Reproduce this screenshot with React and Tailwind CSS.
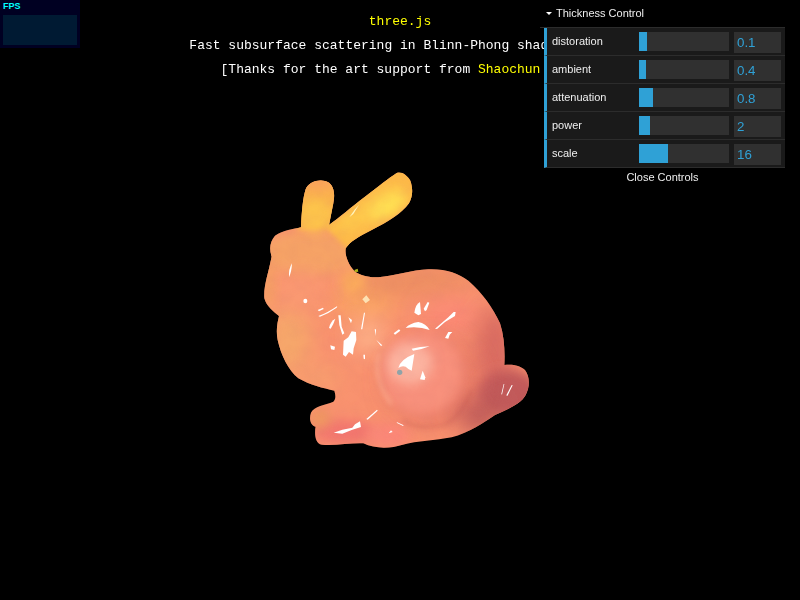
const sans = 'font-["Liberation_Sans",Arial,sans-serif]';

const controls = [
  { label: 'distoration', value: '0.1', fill: 8 },
  { label: 'ambient', value: '0.4', fill: 7 },
  { label: 'attenuation', value: '0.8', fill: 14 },
  { label: 'power', value: '2', fill: 11 },
  { label: 'scale', value: '16', fill: 29 },
];

const silhouette =
  'M138,172 C140,130 143,85 152,58 C162,34 198,24 222,38 C238,50 240,75 235,100 L222,165 C250,145 290,110 330,80 C370,50 400,25 425,9 C440,4 455,15 466,32 C474,55 474,78 462,100 C440,130 400,155 350,180 C310,200 285,215 272,235 C268,260 285,290 300,305 C320,318 345,322 370,322 C420,318 470,300 520,298 C570,296 610,310 640,332 C680,365 715,415 735,460 C748,500 750,545 748,585 C770,582 795,585 810,600 C825,620 825,650 812,675 C795,705 760,715 720,735 C690,755 640,790 590,802 C540,812 490,812 440,825 C410,835 360,838 325,820 C290,818 240,828 200,824 C180,822 178,790 182,770 C165,765 162,745 168,728 C178,708 210,705 235,695 C245,685 240,670 238,662 C205,655 165,645 130,625 C100,600 78,555 68,510 C62,480 68,455 72,438 C55,425 35,410 28,385 C25,350 40,310 50,260 C42,235 45,215 60,197 C85,180 115,178 138,172 Z';

const speculars = [
  'M111,280 Q100,298 102,322 Q110,305 111,280 Z',
  'M188,420 L204,413 L206,417 L192,424 Z',
  'M190,438 Q215,430 247,408 L245,413 Q220,431 195,440 Z',
  'M222,474 Q226,454 241,446 Q236,462 227,476 Z',
  'M250,436 L257,436 L260,470 L268,490 L262,494 L253,465 Z',
  'M280,442 L291,450 L288,460 Z',
  'M266,512 L280,502 L290,484 L303,486 L304,510 L296,535 L294,554 L282,546 L272,560 L264,554 Z',
  'M226,526 L240,530 L238,540 L228,538 Z',
  'M327,428 L330,428 L322,478 L318,478 Z',
  'M325,554 L330,554 L330,568 L326,566 Z',
  'M359,478 L363,478 L363,498 Z',
  'M364,510 L382,526 L378,528 Z',
  'M478,428 Q482,402 495,396 L498,432 L490,436 Z',
  'M506,416 L518,396 L523,398 L515,420 L510,424 Z',
  'M452,474 Q464,460 490,456 Q513,460 524,480 Q490,468 452,474 Z',
  'M540,476 L580,442 L596,426 L602,426 L600,438 L570,456 L546,477 Z',
  'M416,490 L432,478 L436,482 L420,494 Z',
  'M570,504 L580,486 L592,486 L584,494 L580,506 Z',
  'M430,594 Q436,568 478,552 L470,602 Q462,600 452,590 Q440,586 430,594 Z',
  'M470,536 Q495,530 524,529 Q500,539 474,542 Z',
  'M495,628 L503,602 L511,622 L509,630 Z',
  'M236,788 L262,779 L292,773 L300,763 L315,754 L318,771 L290,780 L262,791 Z',
  'M334,747 L366,719 L368,722 L338,749 Z',
  'M401,790 L408,781 L413,786 Z',
  'M425,756 L446,766 L444,768 L426,759 Z',
  'M739,672 L746,642 L748,642 L741,674 Z',
  'M754,676 L770,645 L773,646 L757,678 Z',
];

function Bunny() {
  return (
    <svg viewBox="0 0 855 855" className="absolute left-[255px] top-[170px] w-[285px] h-[285px]">
      <defs>
        <clipPath id="bunny-shape">
          <path d={silhouette} shapeRendering="crispEdges" />
        </clipPath>
        <filter id="soft-lg" x="-50%" y="-50%" width="200%" height="200%">
          <feGaussianBlur stdDeviation="34" />
        </filter>
        <filter id="soft-md" x="-50%" y="-50%" width="200%" height="200%">
          <feGaussianBlur stdDeviation="16" />
        </filter>
        <filter id="soft-sm" x="-50%" y="-50%" width="200%" height="200%">
          <feGaussianBlur stdDeviation="7" />
        </filter>
        <filter id="lumps" x="0" y="0" width="100%" height="100%">
          <feTurbulence type="fractalNoise" baseFrequency="0.03" numOctaves="2" seed="11" />
          <feColorMatrix values="0 0 0 0 0.6  0 0 0 0 0.16  0 0 0 0 0.16  1.8 0 0 0 -0.72" />
          <feGaussianBlur stdDeviation="5" />
        </filter>
      </defs>

      <g clipPath="url(#bunny-shape)">
        <rect width="855" height="855" fill="#f9926f" />

        {/* body colour, orange on the left and red on the right */}
        <ellipse cx="100" cy="510" rx="70" ry="110" fill="#f6a76a" filter="url(#soft-lg)" />
        <ellipse cx="330" cy="390" rx="100" ry="60" fill="#fba564" filter="url(#soft-lg)" />
        <ellipse cx="470" cy="335" rx="190" ry="42" fill="#ec8f60" filter="url(#soft-lg)" />
        <ellipse cx="340" cy="500" rx="50" ry="55" fill="#fdb28a" filter="url(#soft-lg)" />
        <ellipse cx="190" cy="625" rx="70" ry="40" fill="#f7a06e" filter="url(#soft-lg)" />
        <ellipse cx="590" cy="440" rx="90" ry="55" fill="#fb8a76" filter="url(#soft-lg)" />
        <ellipse cx="720" cy="540" rx="60" ry="130" fill="#d96a60" filter="url(#soft-lg)" />
        <ellipse cx="760" cy="670" rx="95" ry="70" fill="#c25a5a" filter="url(#soft-md)" />
        <ellipse cx="670" cy="730" rx="70" ry="55" fill="#bd5a58" filter="url(#soft-lg)" />

        {/* head */}
        <ellipse cx="165" cy="250" rx="150" ry="70" fill="#f6a366" filter="url(#soft-md)" />
        <ellipse cx="135" cy="365" rx="70" ry="55" fill="#fa9a72" filter="url(#soft-lg)" />
        <ellipse cx="40" cy="340" rx="20" ry="75" fill="#f6a264" filter="url(#soft-md)" />
        <ellipse cx="295" cy="335" rx="36" ry="36" fill="#fbab5c" filter="url(#soft-md)" />

        {/* ears */}
        <path d="M130,180 L125,20 L250,15 L240,175 Z" fill="#fbb24e" filter="url(#soft-sm)" />
        <path d="M215,175 L420,-10 L490,10 L490,90 L285,245 Z" fill="#fdb94a" filter="url(#soft-sm)" />
        <ellipse cx="180" cy="135" rx="52" ry="50" fill="#fdc44b" filter="url(#soft-md)" />
        <ellipse cx="190" cy="36" rx="60" ry="24" fill="#f9a35c" filter="url(#soft-md)" />
        <ellipse cx="345" cy="118" rx="120" ry="36" transform="rotate(-33 345 118)" fill="#fec74c" filter="url(#soft-md)" />
        <ellipse cx="398" cy="108" rx="62" ry="28" transform="rotate(-30 398 108)" fill="#ffe053" filter="url(#soft-md)" />

        {/* feet */}
        <ellipse cx="270" cy="785" rx="95" ry="34" fill="#f2766e" filter="url(#soft-md)" />
        <ellipse cx="195" cy="745" rx="30" ry="30" fill="#ee9660" filter="url(#soft-md)" />
        <ellipse cx="400" cy="795" rx="65" ry="36" fill="#fb8878" filter="url(#soft-md)" />

        {/* haunch */}
        <ellipse cx="530" cy="630" rx="140" ry="135" fill="#de6c60" filter="url(#soft-lg)" opacity="0.6" />
        <ellipse cx="500" cy="610" rx="125" ry="125" fill="#f8917c" filter="url(#soft-md)" />
        <ellipse cx="465" cy="580" rx="68" ry="62" fill="#fcb4a0" filter="url(#soft-md)" />
        <path d="M445,752 Q510,785 575,762 Q625,730 650,660" fill="none" stroke="#bb524e" strokeWidth="7" filter="url(#soft-sm)" opacity="0.4" />
        <path d="M372,550 Q350,620 410,705" fill="none" stroke="#fbab8d" strokeWidth="10" filter="url(#soft-sm)" opacity="0.7" />

        {/* lumpy surface */}
        <rect width="855" height="855" filter="url(#lumps)" opacity="0.1" />
      </g>

      <g fill="#ffffff">
        {speculars.map((d) => (
          <path key={d} d={d} />
        ))}
        <ellipse cx="151" cy="393" rx="6" ry="7" />
      </g>
      <path d="M283,142 L300,118 L312,104 L295,132 Z" fill="#fff6c0" />
      <path d="M322,388 L334,376 L345,390 L332,400 Z" fill="#fde2b4" />
      <circle cx="434" cy="607" r="8" fill="#8fa3a8" />
      <path d="M298,300 L308,296 L310,305 L300,306 Z" fill="#aeb21c" />
    </svg>
  );
}

function ControlRow({ label, value, fill }) {
  return (
    <li className="ml-1 flex h-7 border-b border-b-[#2c2c2c] border-l-[3px] border-l-[#2fa1d6] bg-[#1a1a1a] pl-[5px] pr-1 pt-1">
      <span className="w-[87px] text-[11px] leading-[19px] text-[#eeeeee]">{label}</span>
      <div className="h-[19px] w-[90px] bg-[#303030]">
        <div className="h-full bg-[#2fa1d6]" style={{ width: fill }} />
      </div>
      <div className="ml-[5px] h-[21px] w-[47px] bg-[#303030] pl-[3px] text-[13.33px] leading-[21px] text-[#2fa1d6]">
        {value}
      </div>
    </li>
  );
}

function Controls() {
  return (
    <div className={`absolute right-[15px] top-0 w-[245px] text-[11px] will-change-transform ${sans}`}>
      <div className="flex h-7 items-center border-b border-b-[#2c2c2c] bg-black pb-[1px] pl-1.5 text-[#eeeeee]">
        <svg viewBox="0 0 6 3" className="h-[3px] w-1.5">
          <path d="M0,0 L6,0 L3,3 Z" fill="#ffffff" />
        </svg>
        <span className="ml-1 leading-none">Thickness Control</span>
      </div>
      <ul>
        {controls.map((c) => (
          <ControlRow key={c.label} {...c} />
        ))}
      </ul>
      <div className="h-5 bg-black text-center leading-[19px] text-[#eeeeee]">Close Controls</div>
    </div>
  );
}

export default function App() {
  return (
    <div className="relative h-[600px] w-[800px] overflow-hidden bg-black">
      <Bunny />

      <div className='absolute left-0 right-0 top-[10px] text-center font-["Liberation_Mono",monospace] text-[13px] leading-6 text-white will-change-transform'>
        <div className="text-[#ffff00]">three.js</div>
        <div>Fast subsurface scattering in Blinn-Phong shading demo</div>
        <div>
          [Thanks for the art support from <span className="text-[#ffff00]">Shaochun Lin</span>]
        </div>
      </div>

      {/* fps meter */}
      <div className="absolute left-0 top-0 h-12 w-20 bg-[#000022] px-[3px] pt-[1px]">
        <div className={`h-[14px] text-[9px] font-bold leading-[10px] text-[#00ffff] ${sans}`}>FPS</div>
        <div className="h-[30px] bg-[#001a33]" />
      </div>

      <Controls />
    </div>
  );
}
